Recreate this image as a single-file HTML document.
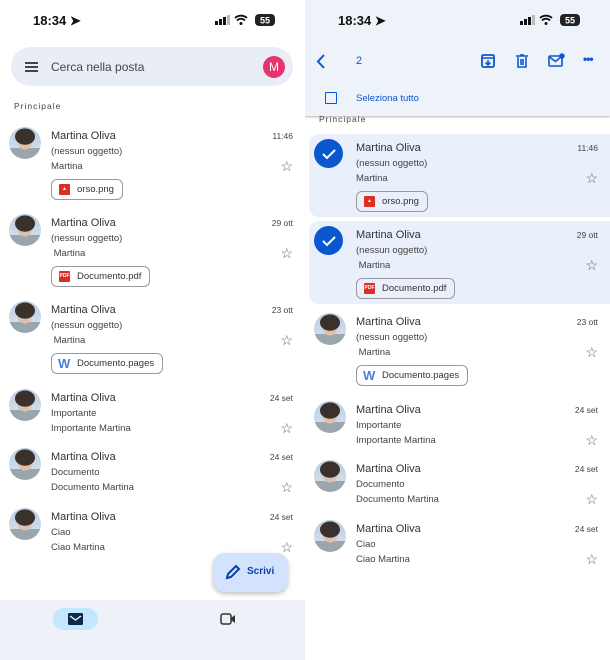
<!DOCTYPE html><html><head><style>
*{margin:0;padding:0;box-sizing:border-box}
body{width:610px;height:660px;position:relative;overflow:hidden;background:#fff;font-family:"Liberation Sans",sans-serif;color:#333}
.p{position:absolute;top:0;width:305px;height:660px;overflow:hidden;background:#fff}
.a{position:absolute}
.row{position:absolute;left:0;width:305px;height:80px}
.av{position:absolute;left:9px;top:0;width:32px;height:32px;border-radius:50%;background:radial-gradient(ellipse 32% 26% at 50% 30%,#3a302c 0 95%,transparent 100%),radial-gradient(circle at 50% 48%,#dcc0ad 0 30%,transparent 32%),linear-gradient(#b7cde0,#cfdcea 65%,#9aa6ad 66%)}
.ck{position:absolute;left:9px;top:0;width:29px;height:29px;border-radius:50%;background:#0b57d0}
.nm{position:absolute;left:51px;top:3px;font-size:11px;color:#333}
.l2{position:absolute;left:51px;top:19px;font-size:9.5px;color:#444}
.l3{position:absolute;left:51px;top:34px;font-size:9.5px;color:#444}
.tm{position:absolute;right:12px;top:4px;font-size:8.5px;color:#444}
.st{position:absolute;right:12px;top:32px;font-size:14px;color:#666;line-height:1}
.chip{position:absolute;left:51px;top:52px;height:21px;border:1px solid #999;border-radius:6px;font-size:9.5px;padding:0 8px 0 25px;line-height:19px;color:#333}
.ic{position:absolute;left:7px;top:4px;width:11px;height:11px;background:#d93025;border-radius:1px;font-size:5px;color:#fff;line-height:11px;text-align:center;font-weight:bold}
.w{position:absolute;left:6px;top:0;font-size:13px;color:#4a7fe0;font-weight:bold}
.sel{position:absolute;left:4px;top:-5px;width:310px;height:83px;background:#e9effb;border-radius:10px}
.status{position:absolute;top:13px;font-size:13px;font-weight:bold;color:#111}
</style></head><body>

<!-- LEFT -->
<div class="p" style="left:0">
<div class="status" style="left:33px">18:34 ➤</div>
<svg class="a" style="left:215px;top:14px" width="62" height="12" viewBox="0 0 62 12"><rect x="0" y="7" width="3" height="4" fill="#111"/><rect x="4" y="5" width="3" height="6" fill="#111"/><rect x="8" y="3" width="3" height="8" fill="#111"/><rect x="12" y="1" width="3" height="10" fill="#bbb"/><path d="M20 4a9 9 0 0 1 12 0M22 6.5a5.5 5.5 0 0 1 8 0" stroke="#111" stroke-width="1.8" fill="none"/><circle cx="26" cy="9.5" r="1.5" fill="#111"/><rect x="40" y="0" width="20" height="12" rx="4" fill="#222"/><text x="50" y="9.5" font-size="9" font-weight="bold" fill="#fff" text-anchor="middle" font-family="Liberation Sans">55</text></svg>
<div class="a" style="left:11px;top:47px;width:282px;height:39px;border-radius:20px;background:#e9eef6"></div>
<div class="a" style="left:25px;top:62px;width:13px;height:2px;background:#444;box-shadow:0 4px 0 #444,0 8px 0 #444"></div>
<div class="a" style="left:51px;top:60px;font-size:12px;color:#444">Cerca nella posta</div>
<div class="a" style="left:263px;top:56px;width:22px;height:22px;border-radius:50%;background:#e8336f;color:#fff;font-size:12px;text-align:center;line-height:22px">M</div>
<div class="a" style="left:14px;top:101px;font-size:8.5px;color:#444;letter-spacing:1px">Principale</div>

<div class="row" style="top:127px"><div class="av"></div><div class="nm">Martina Oliva</div><div class="l2">(nessun oggetto)</div><div class="l3">Martina</div><div class="tm">11:46</div><div class="st">☆</div><div class="chip"><span class="ic">▲</span>orso.png</div></div>
<div class="row" style="top:214px"><div class="av"></div><div class="nm">Martina Oliva</div><div class="l2">(nessun oggetto)</div><div class="l3">&nbsp;Martina</div><div class="tm">29 ott</div><div class="st">☆</div><div class="chip"><span class="ic">PDF</span>Documento.pdf</div></div>
<div class="row" style="top:301px"><div class="av"></div><div class="nm">Martina Oliva</div><div class="l2">(nessun oggetto)</div><div class="l3">&nbsp;Martina</div><div class="tm">23 ott</div><div class="st">☆</div><div class="chip"><span class="w">W</span>Documento.pages</div></div>
<div class="row" style="top:389px"><div class="av"></div><div class="nm">Martina Oliva</div><div class="l2">Importante</div><div class="l3">Importante Martina</div><div class="tm">24 set</div><div class="st">☆</div></div>
<div class="row" style="top:448px"><div class="av"></div><div class="nm">Martina Oliva</div><div class="l2">Documento</div><div class="l3">Documento Martina</div><div class="tm">24 set</div><div class="st">☆</div></div>
<div class="row" style="top:508px"><div class="av"></div><div class="nm">Martina Oliva</div><div class="l2">Ciao</div><div class="l3">Ciao Martina</div><div class="tm">24 set</div><div class="st">☆</div></div>

<div class="a" style="left:213px;top:553px;width:75px;height:39px;border-radius:12px;background:#d3e3fd;box-shadow:0 2px 5px rgba(0,0,0,.25)"></div>
<svg class="a" style="left:225px;top:564px" width="16" height="16" viewBox="0 0 16 16"><path d="M2 14l1-4 8-8 3 3-8 8z" fill="none" stroke="#0b3e9e" stroke-width="2"/></svg>
<div class="a" style="left:247px;top:566px;font-size:10px;font-weight:bold;color:#0b3e9e">Scrivi</div>
<div class="a" style="left:0;top:600px;width:305px;height:60px;background:#eef2f8"></div>
<div class="a" style="left:53px;top:608px;width:45px;height:22px;border-radius:11px;background:#c2e7ff"></div>
<svg class="a" style="left:68px;top:613px" width="15" height="12" viewBox="0 0 15 12"><rect width="15" height="12" rx="1.5" fill="#0b2a4a"/><path d="M2 3l5.5 4L13 3" stroke="#fff" stroke-width="1.3" fill="none"/></svg>
<svg class="a" style="left:220px;top:613px" width="16" height="12" viewBox="0 0 16 12"><rect x="1" y="1" width="10" height="10" rx="2" fill="none" stroke="#333" stroke-width="1.5"/><path d="M11 5l4-3v8l-4-3z" fill="#333"/></svg>
</div>

<!-- RIGHT -->
<div class="p" style="left:305px">
<div class="a" style="left:0;top:0;width:305px;height:116px;background:#eef2f9;box-shadow:0 1px 2px rgba(0,0,0,.3)"></div>
<div class="status" style="left:33px">18:34 ➤</div>
<svg class="a" style="left:215px;top:14px" width="62" height="12" viewBox="0 0 62 12"><rect x="0" y="7" width="3" height="4" fill="#111"/><rect x="4" y="5" width="3" height="6" fill="#111"/><rect x="8" y="3" width="3" height="8" fill="#111"/><rect x="12" y="1" width="3" height="10" fill="#bbb"/><path d="M20 4a9 9 0 0 1 12 0M22 6.5a5.5 5.5 0 0 1 8 0" stroke="#111" stroke-width="1.8" fill="none"/><circle cx="26" cy="9.5" r="1.5" fill="#111"/><rect x="40" y="0" width="20" height="12" rx="4" fill="#222"/><text x="50" y="9.5" font-size="9" font-weight="bold" fill="#fff" text-anchor="middle" font-family="Liberation Sans">55</text></svg>
<svg class="a" style="left:10px;top:54px" width="12" height="15" viewBox="0 0 12 15"><path d="M9 1L3 7.5 9 14" fill="none" stroke="#0b57d0" stroke-width="2"/></svg>
<div class="a" style="left:51px;top:55px;font-size:11px;color:#0b57d0">2</div>
<svg class="a" style="left:176px;top:54px" width="14" height="14" viewBox="0 0 14 14"><rect x="1" y="1" width="12" height="12" rx="1.5" fill="none" stroke="#0b57d0" stroke-width="1.8"/><path d="M1 4h12M7 6v5M4.5 8.5L7 11l2.5-2.5" stroke="#0b57d0" stroke-width="1.6" fill="none"/></svg>
<svg class="a" style="left:211px;top:54px" width="12" height="14" viewBox="0 0 12 14"><path d="M0 2h12M4 1h4M2 3v10h8V3M5 5v6M7 5v6" stroke="#0b57d0" stroke-width="1.6" fill="none"/></svg>
<svg class="a" style="left:243px;top:53px" width="17" height="15" viewBox="0 0 17 15"><rect x="1" y="3" width="13" height="10" rx="1" fill="none" stroke="#0b57d0" stroke-width="1.6"/><path d="M1.5 4l6 4.5L13 4" stroke="#0b57d0" stroke-width="1.5" fill="none"/><circle cx="14" cy="3" r="2.7" fill="#0b57d0"/></svg>
<div class="a" style="left:278px;top:52px;font-size:12px;font-weight:bold;color:#0b57d0;letter-spacing:-1px">•••</div>
<div class="a" style="left:20px;top:92px;width:12px;height:12px;border:1.6px solid #0b57d0;border-radius:1px"></div>
<div class="a" style="left:51px;top:93px;font-size:9.5px;color:#0b57d0">Seleziona tutto</div>
<div class="a" style="left:14px;top:114px;font-size:8.5px;color:#444;letter-spacing:1px">Principale</div>

<div class="row" style="top:139px"><div class="sel"></div><div class="ck"><svg width="29" height="29"><path d="M9 15l4 4 8-8" stroke="#fff" stroke-width="2" fill="none"/></svg></div><div class="nm">Martina Oliva</div><div class="l2">(nessun oggetto)</div><div class="l3">Martina</div><div class="tm">11:46</div><div class="st">☆</div><div class="chip"><span class="ic">▲</span>orso.png</div></div>
<div class="row" style="top:226px"><div class="sel"></div><div class="ck"><svg width="29" height="29"><path d="M9 15l4 4 8-8" stroke="#fff" stroke-width="2" fill="none"/></svg></div><div class="nm">Martina Oliva</div><div class="l2">(nessun oggetto)</div><div class="l3">&nbsp;Martina</div><div class="tm">29 ott</div><div class="st">☆</div><div class="chip"><span class="ic">PDF</span>Documento.pdf</div></div>
<div class="row" style="top:313px"><div class="av"></div><div class="nm">Martina Oliva</div><div class="l2">(nessun oggetto)</div><div class="l3">&nbsp;Martina</div><div class="tm">23 ott</div><div class="st">☆</div><div class="chip"><span class="w">W</span>Documento.pages</div></div>
<div class="row" style="top:401px"><div class="av"></div><div class="nm">Martina Oliva</div><div class="l2">Importante</div><div class="l3">Importante Martina</div><div class="tm">24 set</div><div class="st">☆</div></div>
<div class="row" style="top:460px"><div class="av"></div><div class="nm">Martina Oliva</div><div class="l2">Documento</div><div class="l3">Documento Martina</div><div class="tm">24 set</div><div class="st">☆</div></div>
<div class="row" style="top:520px"><div class="av"></div><div class="nm">Martina Oliva</div><div class="l2">Ciao</div><div class="l3">Ciao Martina</div><div class="tm">24 set</div><div class="st">☆</div></div>
</div>
</body></html>
